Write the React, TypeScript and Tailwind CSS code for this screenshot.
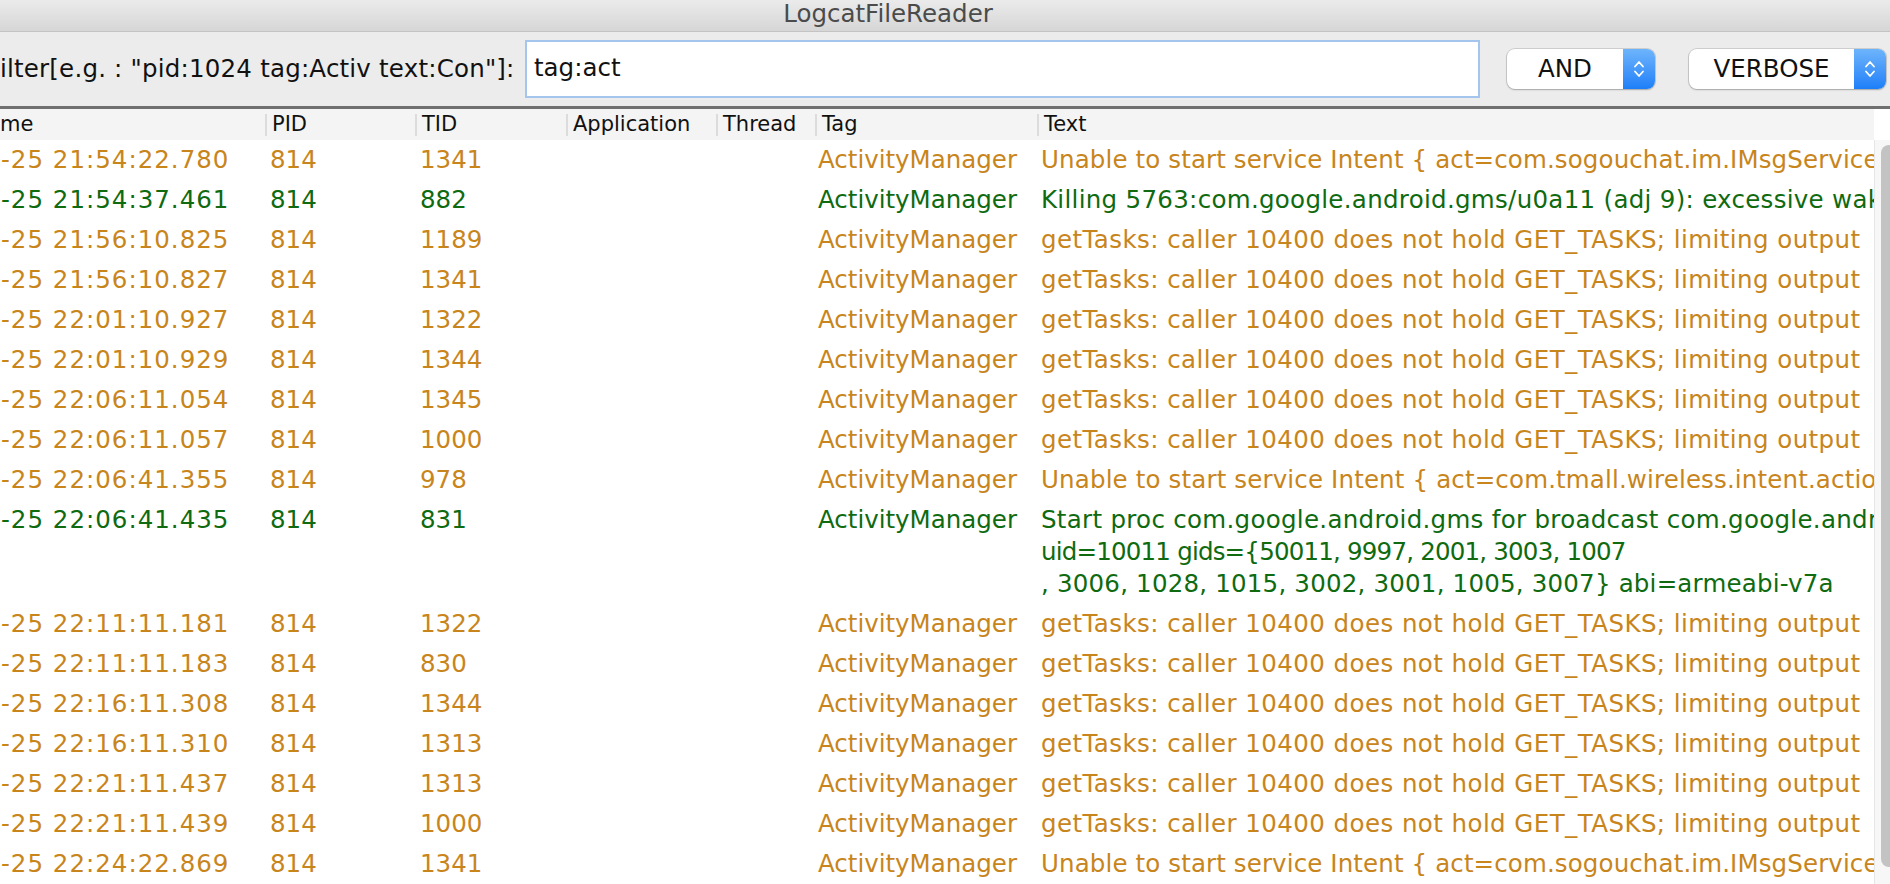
import React from "react";

type Row = {
  time: string;
  pid: string;
  tid: string;
  text: string[];
  tr: string[];
  level: "w" | "i";
};

const GT = "getTasks: caller 10400 does not hold GET_TASKS; limiting output";
const SOGOU = "Unable to start service Intent { act=com.sogouchat.im.IMsgService } U=0: not found";
const TGT = ["tracking-[0.43px]"];
const TSG = ["tracking-[0.12px]"];

const rows: Row[] = [
  { time: "-25 21:54:22.780", pid: "814", tid: "1341", text: [SOGOU], tr: TSG, level: "w" },
  { time: "-25 21:54:37.461", pid: "814", tid: "882", text: ["Killing 5763:com.google.android.gms/u0a11 (adj 9): excessive wake held 59340 during 300001"], tr: ["tracking-[0.3px]"], level: "i" },
  { time: "-25 21:56:10.825", pid: "814", tid: "1189", text: [GT], tr: TGT, level: "w" },
  { time: "-25 21:56:10.827", pid: "814", tid: "1341", text: [GT], tr: TGT, level: "w" },
  { time: "-25 22:01:10.927", pid: "814", tid: "1322", text: [GT], tr: TGT, level: "w" },
  { time: "-25 22:01:10.929", pid: "814", tid: "1344", text: [GT], tr: TGT, level: "w" },
  { time: "-25 22:06:11.054", pid: "814", tid: "1345", text: [GT], tr: TGT, level: "w" },
  { time: "-25 22:06:11.057", pid: "814", tid: "1000", text: [GT], tr: TGT, level: "w" },
  { time: "-25 22:06:41.355", pid: "814", tid: "978", text: ["Unable to start service Intent { act=com.tmall.wireless.intent.action.START_SERVICE } U=0: not found"], tr: ["tracking-[0.15px]"], level: "w" },
  {
    time: "-25 22:06:41.435",
    pid: "814",
    tid: "831",
    text: [
      "Start proc com.google.android.gms for broadcast com.google.android.gms/.gcm.GcmReceiver: pid=6012",
      "uid=10011 gids={50011, 9997, 2001, 3003, 1007",
      ", 3006, 1028, 1015, 3002, 3001, 1005, 3007} abi=armeabi-v7a",
    ],
    tr: ["tracking-[0.3px]", "tracking-[-0.8px]", "tracking-[0.2px]"],
    level: "i",
  },
  { time: "-25 22:11:11.181", pid: "814", tid: "1322", text: [GT], tr: TGT, level: "w" },
  { time: "-25 22:11:11.183", pid: "814", tid: "830", text: [GT], tr: TGT, level: "w" },
  { time: "-25 22:16:11.308", pid: "814", tid: "1344", text: [GT], tr: TGT, level: "w" },
  { time: "-25 22:16:11.310", pid: "814", tid: "1313", text: [GT], tr: TGT, level: "w" },
  { time: "-25 22:21:11.437", pid: "814", tid: "1313", text: [GT], tr: TGT, level: "w" },
  { time: "-25 22:21:11.439", pid: "814", tid: "1000", text: [GT], tr: TGT, level: "w" },
  { time: "-25 22:24:22.869", pid: "814", tid: "1341", text: [SOGOU], tr: TSG, level: "w" },
];

function Chevrons() {
  return (
    <svg width="14" height="24" viewBox="0 0 14 24" fill="none">
      <path d="M3 9.5 L7 5 L11 9.5" stroke="white" strokeWidth="1.8" strokeLinecap="round" strokeLinejoin="round" />
      <path d="M3 14.5 L7 19 L11 14.5" stroke="white" strokeWidth="1.8" strokeLinecap="round" strokeLinejoin="round" />
    </svg>
  );
}

function Combo({ label, width, ml }: { label: string; width: string; ml: string }) {
  return (
    <div
      className={`${width} ${ml} h-[40px] shrink-0 flex rounded-[8px] bg-white shadow-[0_0_0_1px_rgba(0,0,0,0.12),0_1px_2px_rgba(0,0,0,0.2)] overflow-hidden`}
    >
      <div className="flex-1 flex items-center justify-center text-[24.5px] text-[#111] leading-none">{label}</div>
      <div className="w-[32px] flex items-center justify-center bg-linear-to-b from-[#6db4fb] to-[#1b7ff8]">
        <Chevrons />
      </div>
    </div>
  );
}

export default function App() {
  const font = { fontFamily: '"DejaVu Sans", "Open Sans", sans-serif' };
  return (
    <div className="w-full h-[884px] overflow-hidden flex flex-col bg-white" style={font}>
      {/* title bar */}
      <div className="h-[32px] shrink-0 flex items-center justify-center pr-[114px] pb-[3px] bg-linear-to-b from-[#ebebeb] to-[#d6d6d6] border-b border-[#c4c4c4]">
        <span className="text-[24.5px] text-[#4b4b4b] leading-none">LogcatFileReader</span>
      </div>
      {/* toolbar */}
      <div className="h-[74px] shrink-0 flex items-center bg-[#ececec]">
        <div className="w-[525px] shrink-0 whitespace-nowrap overflow-hidden text-[24.5px] tracking-[0.2px] text-[#111]">
          ilter[e.g. : "pid:1024 tag:Activ text:Con"]:
        </div>
        <div className="w-[955px] h-[58px] mb-[1px] shrink-0 bg-white border-2 border-[#a4c6ee] flex items-center pl-[7px] text-[24.5px] text-[#111]">
          tag:act
        </div>
        <Combo label="AND" width="w-[148px]" ml="ml-[27px]" />
        <Combo label="VERBOSE" width="w-[197px]" ml="ml-[34px]" />
      </div>
      <div className="h-[3px] shrink-0 bg-[#6f6f6f]" />
      {/* table */}
      <div className="flex-1 flex min-h-0">
        <div className="flex-1 min-w-0 flex flex-col">
          <div className="h-[31px] shrink-0 flex items-center bg-[#f4f4f4] text-[21px] text-[#111] leading-none whitespace-nowrap">
            <div className="w-[265px] shrink-0">me</div>
            <div className="w-[150px] shrink-0 h-[22px] flex items-center border-l-2 border-[#dcdcdc] pl-[5px]">PID</div>
            <div className="w-[151px] shrink-0 h-[22px] flex items-center border-l-2 border-[#dcdcdc] pl-[5px]">TID</div>
            <div className="w-[150px] shrink-0 h-[22px] flex items-center border-l-2 border-[#dcdcdc] pl-[5px]">Application</div>
            <div className="w-[99px] shrink-0 h-[22px] flex items-center border-l-2 border-[#dcdcdc] pl-[5px]">Thread</div>
            <div className="w-[222px] shrink-0 h-[22px] flex items-center border-l-2 border-[#dcdcdc] pl-[5px]">Tag</div>
            <div className="flex-1 h-[22px] flex items-center border-l-2 border-[#dcdcdc] pl-[5px]">Text</div>
          </div>
          <div className="flex-1 flex flex-col text-[24.5px] leading-[32px]">
            {rows.map((r, i) => (
              <div
                key={i}
                className={`flex items-start py-[4px] whitespace-nowrap ${r.level === "w" ? "text-[#c8851c]" : "text-[#0f6a10]"}`}
              >
                <div className="w-[265px] shrink-0 overflow-hidden pl-[1px] tracking-[1px]">{r.time}</div>
                <div className="w-[150px] shrink-0 overflow-hidden pl-[5px]">{r.pid}</div>
                <div className="w-[151px] shrink-0 overflow-hidden pl-[5px]">{r.tid}</div>
                <div className="w-[150px] shrink-0" />
                <div className="w-[99px] shrink-0" />
                <div className="w-[222px] shrink-0 overflow-hidden pl-[3px]">ActivityManager</div>
                <div className="flex-1 min-w-0 overflow-hidden pl-[4px]">
                  {r.text.map((t, j) => (
                    <div key={j} className={r.tr[j]}>
                      {t}
                    </div>
                  ))}
                </div>
              </div>
            ))}
          </div>
        </div>
        {/* scrollbar */}
        <div className="w-[16px] shrink-0 flex flex-col">
          <div className="h-[31px] shrink-0 bg-white" />
          <div className="flex-1 bg-[#f7f7f7] border-l border-[#e6e6e6] pl-[6px] pt-[5px] overflow-hidden">
            <div className="w-[16px] h-[722px] rounded-[8px] bg-[#c3c3c3]" />
          </div>
        </div>
      </div>
    </div>
  );
}
